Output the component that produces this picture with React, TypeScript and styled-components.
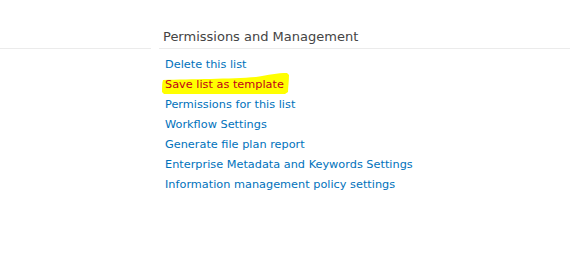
import React from "react";
import styled, { createGlobalStyle } from "styled-components";

const Global = createGlobalStyle`
  html, body { margin: 0; padding: 0; background: #fff; }
  body { font-family: "DejaVu Sans", Verdana, sans-serif; }
`;

const Page = styled.div`
  width: 570px;
  height: 259px;
  display: grid;
  grid-template-columns: 151px 1fr;
  column-gap: 8px;
  padding-top: 28px;
  box-sizing: border-box;
`;

const LeftColumn = styled.div`
  height: 20px;
  border-bottom: 1px solid #ebebeb;
`;

const Section = styled.div`
  display: flex;
  flex-direction: column;
`;

const Heading = styled.h3`
  margin: 0;
  padding: 0 0 2px 4px;
  height: 18px;
  border-bottom: 1px solid #ebebeb;
  font-weight: normal;
  font-size: 13px;
  color: #444;
  line-height: 18px;
`;

const LinkList = styled.ul`
  list-style: none;
  margin: 0;
  padding: 6px 0 0 6px;
  display: flex;
  flex-direction: column;
`;

const Item = styled.li`
  height: 20px;
  line-height: 20px;
  font-size: 11.3px;
  position: relative;
`;

const Link = styled.a<{ $marked?: boolean }>`
  color: ${(p) => (p.$marked ? "#c00018" : "#0072bc")};
  text-decoration: none;
  position: relative;
  z-index: 1;
`;

const Marker = styled.svg`
  position: absolute;
  left: -4px;
  top: -6px;
  z-index: 0;
`;

const links = [
  "Delete this list",
  "Save list as template",
  "Permissions for this list",
  "Workflow Settings",
  "Generate file plan report",
  "Enterprise Metadata and Keywords Settings",
  "Information management policy settings",
];

export default function App() {
  return (
    <>
      <Global />
      <Page>
        <LeftColumn />
        <Section>
          <Heading>Permissions and Management</Heading>
          <LinkList>
            {links.map((l, i) => (
              <Item key={l}>
                {i === 1 && (
                  <Marker width="132" height="28" viewBox="0 0 132 28">
                    <path
                      d="M2 11 C 30 10, 70 10, 95 8 C 108 6, 116 4, 126 4 L 128 6 C 128 12, 127 18, 127 23 L 124 25 C 100 25, 60 25, 3 25 L 1 23 C 1 18, 1 14, 2 11 Z"
                      fill="#ffff00"
                    />
                  </Marker>
                )}
                <Link href="#" $marked={i === 1}>
                  {l}
                </Link>
              </Item>
            ))}
          </LinkList>
        </Section>
      </Page>
    </>
  );
}
